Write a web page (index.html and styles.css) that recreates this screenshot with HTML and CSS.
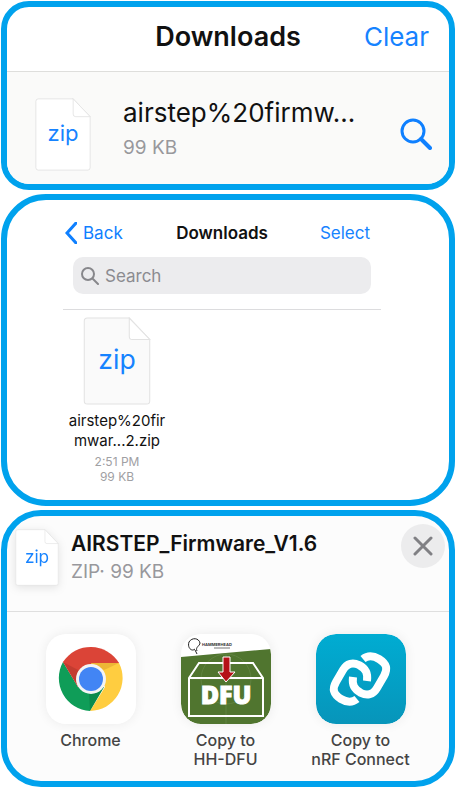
FILE: index.html
```html
<!DOCTYPE html>
<html lang="en">

<head>
    <meta charset="utf-8">
    <meta name="viewport" content="width=device-width, initial-scale=1">
    <title>Downloads</title>
    <link rel="stylesheet" href="styles.css">
</head>

<body>
    <!-- Browser download list -->
    <section class="panel browser">
        <header class="browser-header">
            <h2>Downloads</h2>
            <button type="button" class="link-button">Clear</button>
        </header>
        <div class="download-row">
            <svg class="file-icon" viewBox="0 0 66 86" aria-hidden="true">
                <path class="sheet" d="M4 1H45L65 22V82Q65 85 62 85H4Q1 85 1 82V4Q1 1 4 1Z"/>
                <path class="fold" d="M45 1V19Q45 22 48 22H65Z"/>
                <text x="33" y="51">zip</text>
            </svg>
            <div class="download-info">
                <div class="download-name">airstep%20firmw...</div>
                <div class="download-size">99 KB</div>
            </div>
            <button type="button" class="find-button" aria-label="Show in Files">
                <svg viewBox="0 0 32 32">
                    <circle cx="13" cy="13" r="11"/>
                    <path d="M21 21L30 30" stroke-width="4"/>
                </svg>
            </button>
        </div>
    </section>

    <!-- Files app -->
    <section class="panel files">
        <nav class="files-nav">
            <a href="#" class="back">
                <svg viewBox="0 0 12 22" aria-hidden="true"><path d="M11 1L2 11L11 21"/></svg>
                Back
            </a>
            <h2>Downloads</h2>
            <button type="button" class="link-button">Select</button>
        </nav>
        <label class="search">
            <svg viewBox="0 0 18 18" aria-hidden="true">
                <circle cx="7" cy="7" r="6"/>
                <path d="M12 12L17 17"/>
            </svg>
            <input type="search" placeholder="Search" aria-label="Search">
        </label>
        <div class="file-grid">
            <a href="#" class="file">
                <svg class="file-icon" viewBox="0 0 66 86" aria-hidden="true">
                    <path class="sheet" d="M4 1H45L65 22V82Q65 85 62 85H4Q1 85 1 82V4Q1 1 4 1Z"/>
                    <path class="fold" d="M45 1V19Q45 22 48 22H65Z"/>
                    <text x="33" y="51">zip</text>
                </svg>
                <span class="file-name">airstep%20fir<br>mwar...2.zip</span>
                <span class="file-meta">2:51 PM<br>99 KB</span>
            </a>
        </div>
    </section>

    <!-- Share sheet -->
    <section class="panel share">
        <header class="share-header">
            <svg class="file-icon" viewBox="0 0 66 86" aria-hidden="true">
                <path class="sheet" d="M4 1H45L65 22V82Q65 85 62 85H4Q1 85 1 82V4Q1 1 4 1Z"/>
                <path class="fold" d="M45 1V19Q45 22 48 22H65Z"/>
                <text x="33" y="51">zip</text>
            </svg>
            <div class="share-info">
                <h2>AIRSTEP_Firmware_V1.6</h2>
                <p>ZIP· 99 KB</p>
            </div>
            <button type="button" class="close-button" aria-label="Close">
                <svg viewBox="0 0 20 20"><path d="M2 2L18 18M18 2L2 18"/></svg>
            </button>
        </header>
        <div class="apps">
            <button type="button" class="app">
                <svg class="app-icon" viewBox="0 0 90 90" aria-hidden="true">
                    <rect width="90" height="90" rx="20" fill="#fff"/>
                    <path d="M45 45L17 28A33 33 0 0 1 73 29Z" fill="#db4437"/>
                    <path d="M17 28A33 33 0 0 0 44 77L58 53L32 53Z" fill="#0f9d58"/>
                    <path d="M73 29A33 33 0 0 1 44 77L59 53L45 29Z" fill="#ffcd40"/>
                    <path d="M17 28L32 53L45 45V29H73L60 20H30Z" fill="#db4437"/>
                    <path d="M17 28L32 53L34 37Z" fill="#a63228" opacity=".45"/>
                    <path d="M44 77L58 53L43 60Z" fill="#087a42" opacity=".5"/>
                    <path d="M45 29H73L58 36Z" fill="#dba02b" opacity=".5"/>
                    <circle cx="45" cy="45" r="15" fill="#f4f4f4"/>
                    <circle cx="45" cy="45" r="12" fill="#4285f4"/>
                </svg>
                <span>Chrome</span>
            </button>
            <button type="button" class="app">
                <svg class="app-icon" viewBox="0 0 90 90" aria-hidden="true">
                    <clipPath id="tile"><rect width="90" height="90" rx="20"/></clipPath>
                    <g clip-path="url(#tile)">
                        <rect width="90" height="90" fill="#fff"/>
                        <path d="M0 23L90 15V90H0Z" fill="#50752f"/>
                        <g fill="none" stroke="#5f8240">
                            <circle cx="45" cy="45" r="25"/>
                            <path d="M45 20V90M10 45H80"/>
                        </g>
                        <path d="M16 17C14 13 19 12 19 9C18 4 11 3 8 8C6 14 11 18 14 15M14 16L16 20" fill="none" stroke="#222" stroke-width="1"/>
                        <text class="brand" x="21" y="12">HAMMERHEAD</text>
                        <path d="M33 14H49" stroke="#777" stroke-width="1"/>
                        <path d="M8 44L18 29H72L82 44V82H8ZM8 44H82" fill="none" stroke="#fff" stroke-width="2"/>
                        <path d="M42 23H49V38H54L45 48L37 38H42Z" fill="#b51218" stroke="#fff" stroke-width="1"/>
                        <text class="dfu" x="45" y="70">DFU</text>
                    </g>
                </svg>
                <span>Copy to<br>HH-DFU</span>
            </button>
            <button type="button" class="app">
                <svg class="app-icon" viewBox="0 0 90 90" aria-hidden="true">
                    <linearGradient id="nrf" x2="0" y2="1">
                        <stop stop-color="#00acd2"/>
                        <stop offset="1" stop-color="#0795ba"/>
                    </linearGradient>
                    <rect width="90" height="90" rx="20" fill="url(#nrf)"/>
                    <g fill="none" stroke="#fff" stroke-width="8">
                        <path d="M41 65C36 69 30 68 25 65C17 60 16 55 20 48L27 36C31 29 37 28 43 31C50 35 52 39 51 47"/>
                        <path d="M47 25C52 21 58 22 63 25C71 30 72 35 68 42L61 54C57 61 51 62 45 59C38 55 36 51 37 43"/>
                    </g>
                </svg>
                <span>Copy to<br>nRF Connect</span>
            </button>
        </div>
    </section>
</body>

</html>
```

FILE: styles.css
```css
* {
    box-sizing: border-box;
}

body {
    margin: 0;
    padding: 1px;
    display: flex;
    flex-direction: column;
    gap: 4px;
    background-color: white;
    font-family: Inter, "Liberation Sans", sans-serif;
    color: #111;
}

h2,
p {
    margin: 0;
}

h2 {
    font-weight: 600;
}

button {
    padding: 0;
    border: none;
    background: none;
    font-family: inherit;
    color: inherit;
    cursor: pointer;
}

a {
    color: inherit;
    text-decoration: none;
}

svg {
    display: block;
    flex: none;
}

.panel {
    border: 6px solid #00a2ed;
    overflow: hidden;
}

.link-button {
    color: #1683ff;
    font-size: inherit;
}

.file-icon .sheet,
.file-icon .fold {
    fill: #fff;
    stroke: #e2e2e2;
    stroke-width: 1;
}

.file-icon text {
    fill: #1683ff;
    font-size: 26px;
    text-anchor: middle;
}

/* Browser download list */
.browser {
    border-radius: 28px;
}

.browser-header {
    display: grid;
    grid-template-columns: 1fr auto 1fr;
    align-items: center;
    height: 65px;
    padding: 0 20px 6px;
    border-bottom: 1px solid #dededc;
    font-size: 26px;
}

.browser-header h2 {
    grid-column: 2;
    font-size: 27px;
}

.browser-header .link-button {
    justify-self: end;
}

.download-row {
    display: flex;
    align-items: center;
    height: 112px;
    padding: 0 17px 0 28px;
    background-color: #fafaf9;
}

.download-row .file-icon {
    width: 56px;
    height: 73px;
    margin-top: 12px;
}

.download-info {
    flex: 1;
    margin-left: 32px;
}

.download-name {
    font-size: 26px;
    line-height: 40px;
}

.download-size {
    color: #98989c;
    font-size: 19px;
    line-height: 30px;
}

.find-button svg {
    width: 32px;
    height: 32px;
    margin-top: 12px;
    fill: none;
    stroke: #0f80ff;
    stroke-width: 3;
    stroke-linecap: round;
}

/* Files app */
.files {
    padding: 19px 68px 16px 56px;
    border-radius: 45px;
}

.files-nav {
    display: grid;
    grid-template-columns: 1fr auto 1fr;
    align-items: center;
    height: 28px;
    padding: 0 11px;
    font-size: 17px;
}

.files-nav h2 {
    font-size: 17px;
}

.files-nav .link-button {
    justify-self: end;
}

.back {
    display: flex;
    align-items: center;
    gap: 6px;
    margin-left: -9px;
    color: #0f80ff;
}

.back svg {
    width: 12px;
    height: 22px;
    fill: none;
    stroke: #0f80ff;
    stroke-width: 3;
    stroke-linecap: round;
}

.search {
    display: flex;
    align-items: center;
    gap: 6px;
    height: 37px;
    margin: 10px 10px 15px;
    padding: 0 8px;
    border-radius: 10px;
    background-color: #ececee;
}

.search svg {
    width: 18px;
    height: 18px;
    fill: none;
    stroke: #87878b;
    stroke-width: 2;
    stroke-linecap: round;
}

.search input {
    flex: 1;
    min-width: 0;
    padding: 0;
    border: none;
    outline: none;
    background: none;
    font-family: inherit;
    font-size: 17px;
}

.search input::placeholder {
    color: #8b8b90;
}

.file-grid {
    display: flex;
    padding-top: 7px;
    border-top: 1px solid #dcdcde;
}

.file {
    display: flex;
    flex-direction: column;
    align-items: center;
    width: 108px;
    text-align: center;
}

.file .file-icon {
    width: 68px;
    height: 88px;
}

.file .sheet {
    fill: #fafafa;
}

.file-name {
    margin-top: 6px;
    font-size: 15px;
    line-height: 20px;
}

.file-meta {
    margin-top: 3px;
    color: #a0a0a3;
    font-size: 12px;
    line-height: 15px;
}

/* Share sheet */
.share {
    border-radius: 40px;
    background-color: #fcfcfc;
}

.share-header {
    display: flex;
    align-items: flex-start;
    height: 96px;
    padding: 8px 4px 0 8px;
    border-bottom: 1px solid #dfdfdf;
}

.share-header .file-icon {
    width: 44px;
    height: 57px;
    margin-top: 5px;
    filter: drop-shadow(0 2px 4px rgba(0, 0, 0, 0.1));
}

.share-info {
    flex: 1;
    margin-left: 12px;
    padding-top: 6px;
}

.share-info h2 {
    font-size: 21px;
    line-height: 28px;
}

.share-info p {
    color: #98989c;
    font-size: 19px;
    line-height: 28px;
}

.close-button {
    display: grid;
    place-items: center;
    width: 44px;
    height: 44px;
    border-radius: 50%;
    background-color: #ececed;
}

.close-button svg {
    width: 20px;
    height: 20px;
    fill: none;
    stroke: #808084;
    stroke-width: 3;
    stroke-linecap: round;
}

.apps {
    display: flex;
    padding: 22px 21px 12px 16px;
}

.app {
    display: flex;
    flex: 1 1 0;
    flex-direction: column;
    align-items: center;
    color: #444;
    font-size: 16px;
    font-weight: 500;
    line-height: 19px;
    white-space: nowrap;
}

.app-icon {
    width: 90px;
    height: 90px;
    margin-bottom: 7px;
    border-radius: 20px;
    box-shadow: 0 0 12px rgba(0, 0, 0, 0.07);
}

.app-icon .brand {
    fill: #333;
    font-size: 4px;
    font-weight: 700;
}

.app-icon .dfu {
    fill: #fff;
    font-family: "Open Sans", sans-serif;
    font-size: 25px;
    font-weight: 800;
    text-anchor: middle;
    stroke: #fff;
    stroke-width: 1;
}
```
